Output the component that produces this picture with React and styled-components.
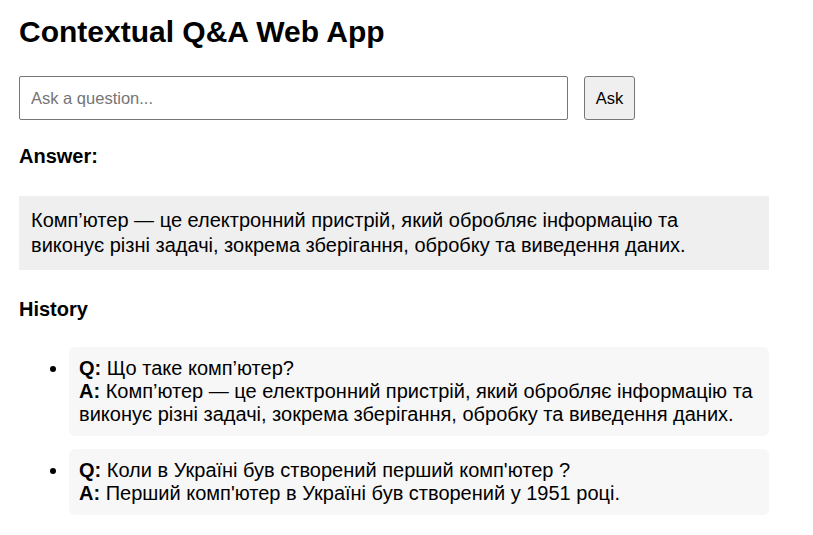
import styled, { createGlobalStyle } from 'styled-components';

const GlobalStyle = createGlobalStyle`
  body {
    margin: 0;
    background: #ffffff;
    color: #000000;
    font-family: "Liberation Sans", Arial, sans-serif;
  }
`;

const history = [
  {
    q: 'Що таке комп’ютер?',
    a: 'Комп’ютер — це електронний пристрій, який обробляє інформацію та виконує різні задачі, зокрема зберігання, обробку та виведення даних.',
  },
  {
    q: "Коли в Україні був створений перший комп'ютер ?",
    a: "Перший комп'ютер в Україні був створений у 1951 році.",
  },
];

const App = () => {
  return (
    <>
      <GlobalStyle />
      <Page>
        <Title>Contextual Q&amp;A Web App</Title>
        <AskForm onSubmit={(e) => e.preventDefault()}>
          <QuestionInput placeholder="Ask a question..." />
          <AskButton type="submit">Ask</AskButton>
        </AskForm>

        <SectionTitle>Answer:</SectionTitle>
        <AnswerBox>
          Комп’ютер — це електронний пристрій, який обробляє інформацію та виконує різні задачі,
          зокрема зберігання, обробку та виведення даних.
        </AnswerBox>

        <SectionTitle $top={28}>History</SectionTitle>
        <HistoryList>
          {history.map((item, i) => (
            <HistoryItem key={i}>
              <b>Q:</b> {item.q}
              <br />
              <b>A:</b> {item.a}
            </HistoryItem>
          ))}
        </HistoryList>
      </Page>
    </>
  );
};

export default App;

const Page = styled.div`
  width: 750px;
  padding: 0 19px;
`;

const Title = styled.h1`
  font-size: 30px;
  font-weight: bold;
  margin: 15px 0 0;
  line-height: 34px;
`;

const AskForm = styled.form`
  display: flex;
  align-items: stretch;
  gap: 16px;
  margin-top: 27px;
`;

const QuestionInput = styled.input`
  width: 549px;
  box-sizing: border-box;
  height: 44px;
  padding: 12px 11px;
  font-size: 16.5px;
  font-family: "Liberation Sans", Arial, sans-serif;
  border: 1px solid #767676;
  border-radius: 2px;
  outline: none;

  &::placeholder {
    color: #757575;
  }
`;

const AskButton = styled.button`
  width: 51px;
  height: 44px;
  padding: 0;
  font-size: 16.5px;
  font-family: "Liberation Sans", Arial, sans-serif;
  color: #000;
  background: #efefef;
  border: 1px solid #767676;
  border-radius: 3px;
  cursor: pointer;
`;

const SectionTitle = styled.h3`
  font-size: 20px;
  font-weight: bold;
  line-height: 23px;
  margin: ${(p) => p.$top ?? 25}px 0 0;
`;

const AnswerBox = styled.div`
  margin-top: 28px;
  background: #efefef;
  padding: 12px 60px 12px 12px;
  font-size: 20px;
  line-height: 25px;
`;

const HistoryList = styled.ul`
  margin: 26px 0 0;
  padding: 0 0 0 50px;
`;

const HistoryItem = styled.li`
  background: #f7f7f7;
  border-radius: 6px;
  padding: 10px;
  margin-bottom: 13px;
  font-size: 20px;
  line-height: 23px;
`;
